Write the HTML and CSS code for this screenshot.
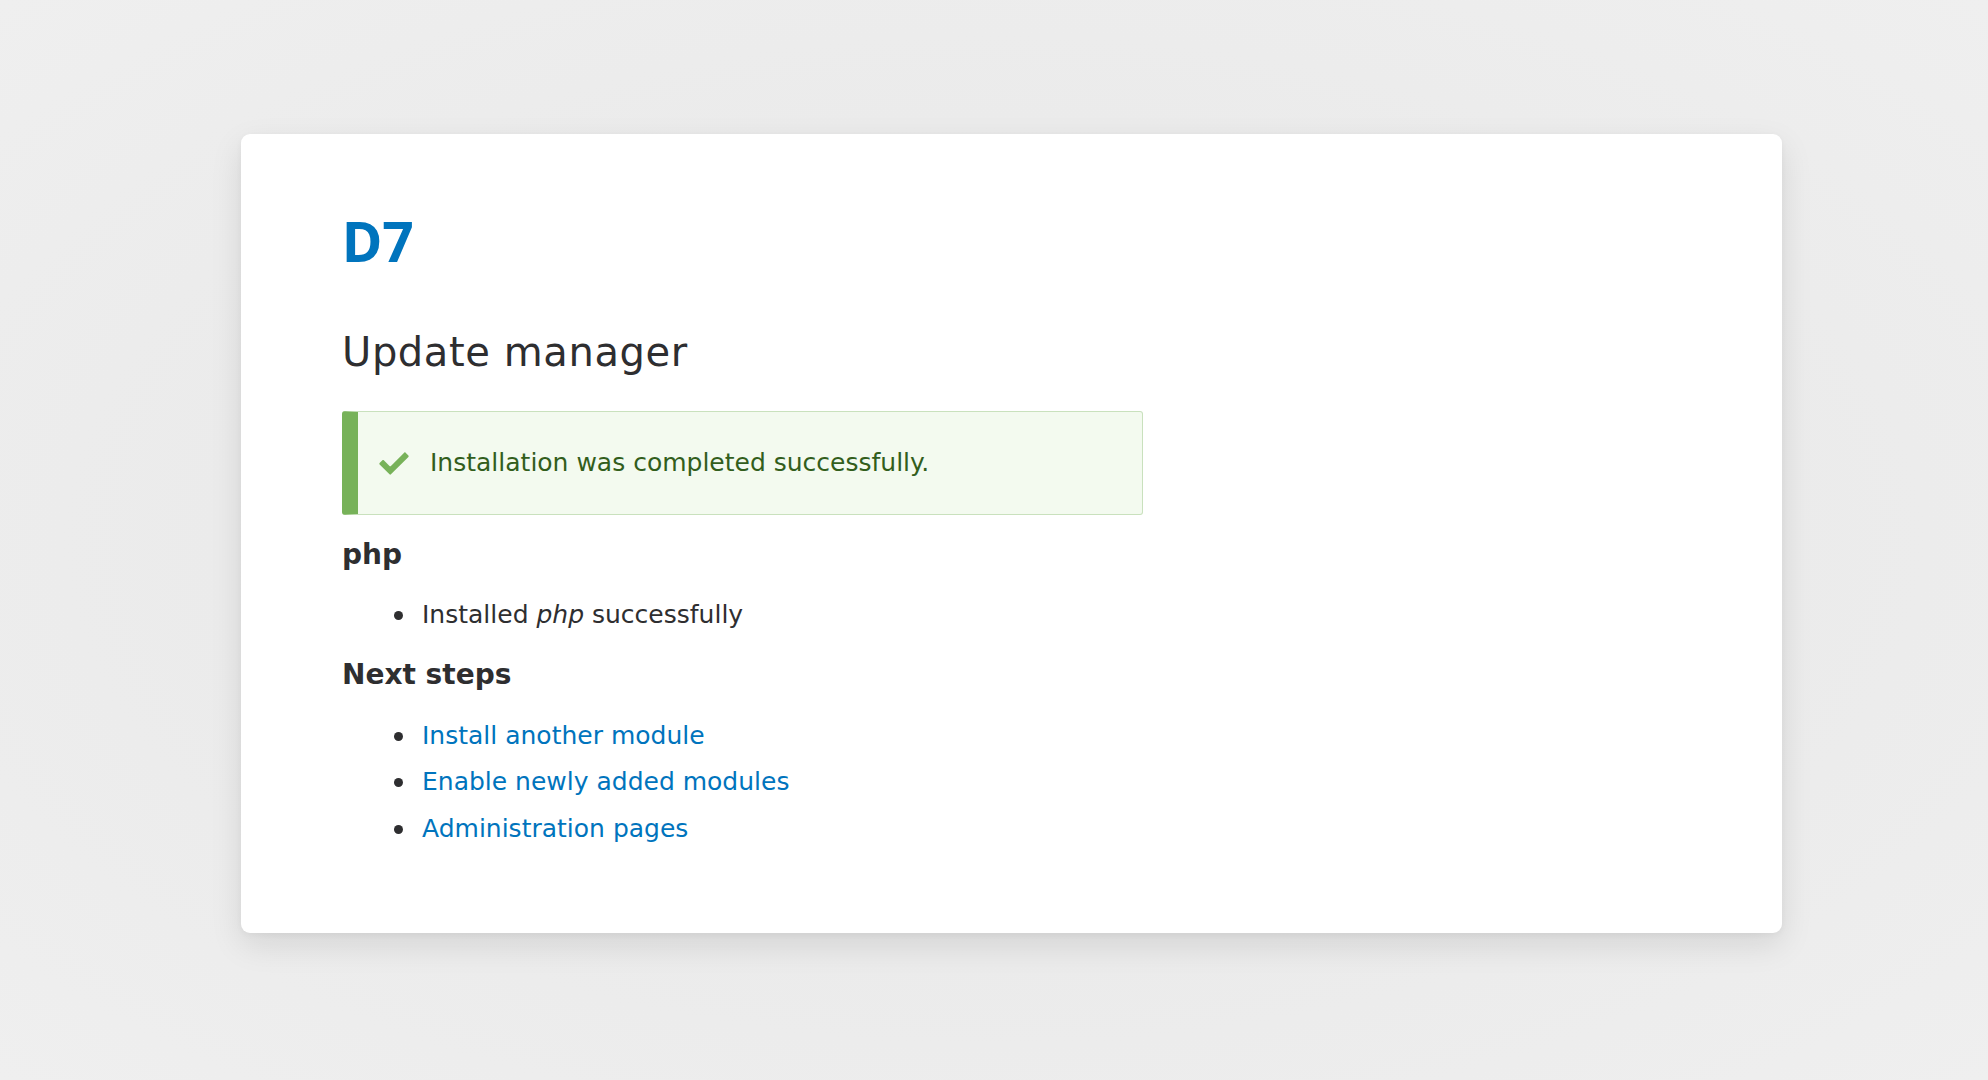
FILE: index.html
```html
<!DOCTYPE html>
<html lang="en">
<head>
<meta charset="utf-8">
<title>Update manager | D7</title>
<link rel="stylesheet" href="styles.css">
</head>
<body>
  <main class="card">
    <div class="site-name"><a href="#">D7</a></div>
    <h1 class="page-title">Update manager</h1>
    <div class="message message-status" role="status">
      <svg class="message-icon" width="32" height="32" viewBox="0 0 16 16" aria-hidden="true"><path fill="#77b259" d="M6.464 13.676c-.194.194-.513.194-.707 0l-4.96-4.955c-.194-.193-.194-.513 0-.707l1.405-1.407c.194-.195.512-.195.707 0l2.849 2.848c.194.193.513.193.707 0l6.629-6.626c.195-.194.514-.194.707 0l1.404 1.404c.193.194.193.513 0 .707l-8.741 8.736z"/></svg>
      <span class="message-text">Installation was completed successfully.</span>
    </div>
    <h2 class="section-title">php</h2>
    <ul class="item-list">
      <li>Installed <em>php</em> successfully</li>
    </ul>
    <h2 class="section-title">Next steps</h2>
    <ul class="item-list">
      <li><a href="#">Install another module</a></li>
      <li><a href="#">Enable newly added modules</a></li>
      <li><a href="#">Administration pages</a></li>
    </ul>
  </main>
</body>
</html>
```
FILE: styles.css
```css
html, body {
  margin: 0;
  height: 100%;
}
body {
  box-sizing: border-box;
  padding: 134px 206px 0 241px;
  background: radial-gradient(ellipse at 50% 50%, #e8e9e9 0%, #ebebeb 55%, #efefef 100%);
  font-family: "DejaVu Sans", "Lucida Grande", sans-serif;
  color: #2e2e30;
  font-size: 25px;
}
.card {
  display: block;
  background: #fff;
  border-radius: 9px;
  box-shadow: 0 12px 32px rgba(0, 0, 0, 0.10), 0 2px 6px rgba(0, 0, 0, 0.04);
  padding: 77px 100px 62px 101px;
}
a {
  color: #0074bd;
  text-decoration: none;
}
.site-name {
  font-family: "Noto Sans", "DejaVu Sans", sans-serif;
  font-weight: 700;
  font-size: 55px;
  line-height: 60px;
}
.page-title {
  margin: 57px 0 35px;
  font-weight: 400;
  font-size: 40px;
  line-height: 48px;
  letter-spacing: 0.6px;
  color: #2e2e30;
}
.message {
  box-sizing: border-box;
  width: 801px;
  display: flex;
  align-items: center;
  gap: 20px;
  padding: 32px 20px 32px 20px;
  background: #f3faef;
  border: 1px solid #c9e1bd;
  border-left: 16px solid #77b259;
  border-radius: 3px;
  color: #325e1c;
  line-height: 37.5px;
  margin-bottom: 22px;
}
.message-icon {
  flex: none;
  display: block;
}
.section-title {
  margin: 0;
  font-size: 28px;
  font-weight: 700;
  line-height: 36.4px;
  color: #2e2e30;
}
.item-list {
  margin: 19px 0;
  padding-left: 80px;
  list-style: none;
}
.item-list li {
  position: relative;
  line-height: 46.5px;
}
.item-list li::before {
  content: "";
  position: absolute;
  left: -28px;
  top: 50%;
  width: 9px;
  height: 9px;
  margin-top: -4.5px;
  border-radius: 50%;
  background: #2e2e30;
}
```
